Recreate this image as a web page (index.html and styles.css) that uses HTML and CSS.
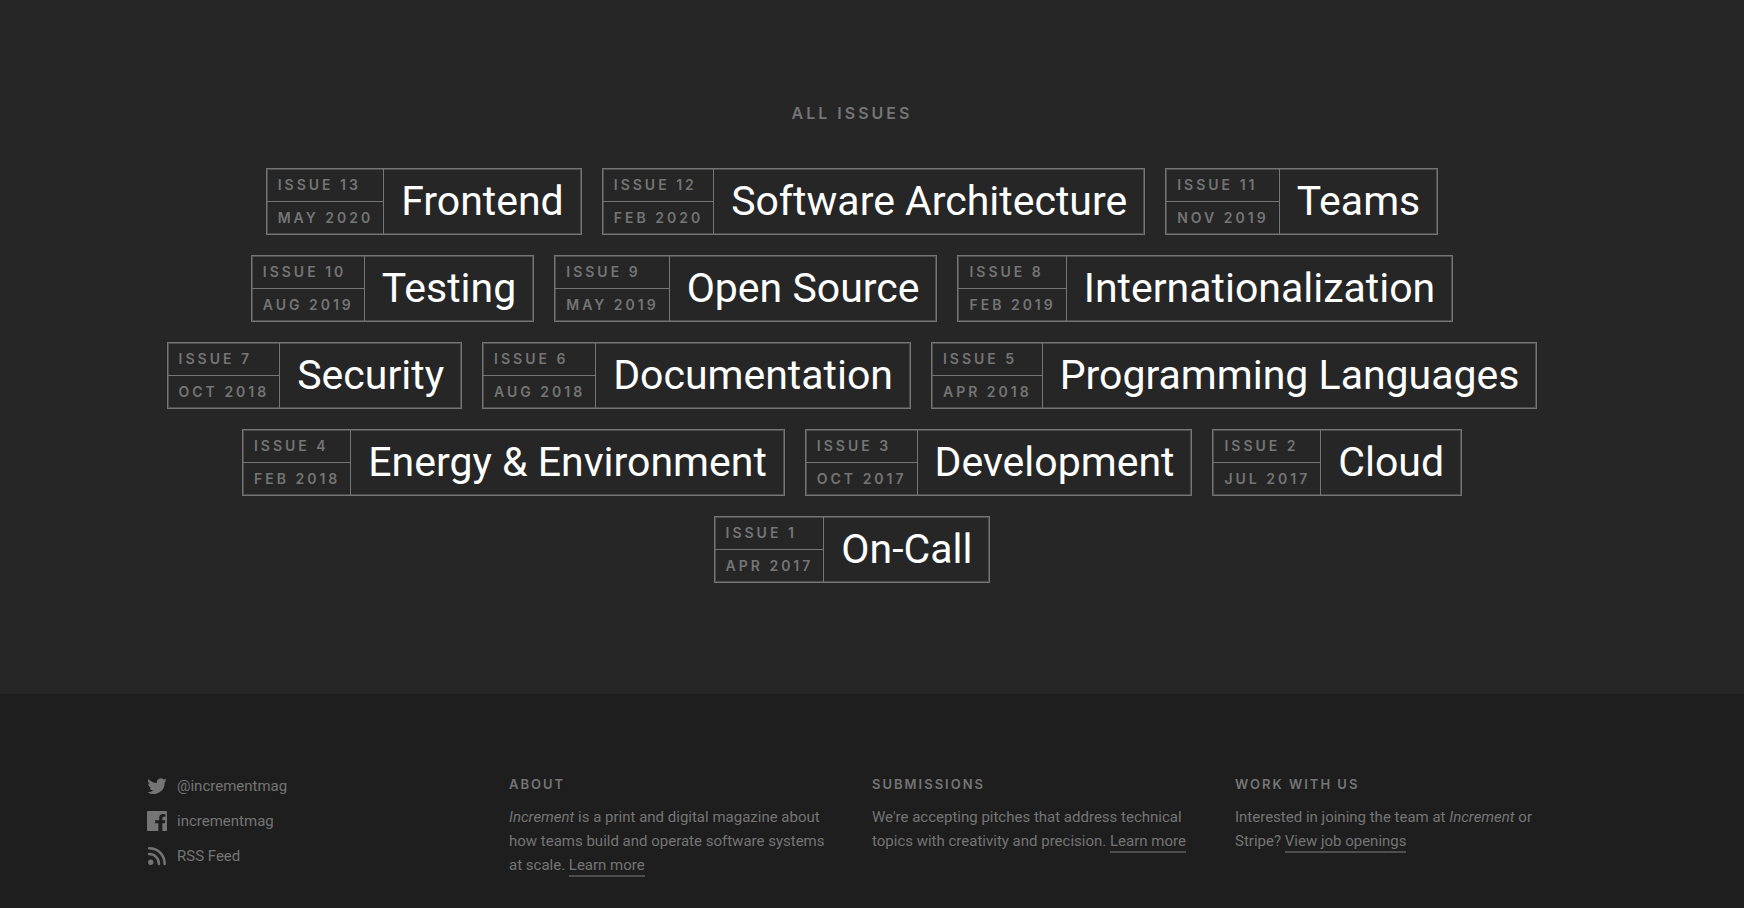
FILE: index.html
```html
<!DOCTYPE html>
<html lang="en">
<head>
<meta charset="utf-8">
<title>Increment: All Issues</title>
<link rel="stylesheet" href="styles.css">
</head>
<body>
<main class="issues">
  <div class="wrap issues-inner">
    <h2 class="issues-heading">All Issues</h2>
    <div class="issue-list">
      <a class="issue" href="#"><span class="meta"><span class="cell">Issue 13</span><span class="cell">May 2020</span></span><span class="name">Frontend</span></a>
      <a class="issue" href="#"><span class="meta"><span class="cell">Issue 12</span><span class="cell">Feb 2020</span></span><span class="name">Software Architecture</span></a>
      <a class="issue" href="#"><span class="meta"><span class="cell">Issue 11</span><span class="cell">Nov 2019</span></span><span class="name">Teams</span></a>
      <a class="issue" href="#"><span class="meta"><span class="cell">Issue 10</span><span class="cell">Aug 2019</span></span><span class="name">Testing</span></a>
      <a class="issue" href="#"><span class="meta"><span class="cell">Issue 9</span><span class="cell">May 2019</span></span><span class="name">Open Source</span></a>
      <a class="issue" href="#"><span class="meta"><span class="cell">Issue 8</span><span class="cell">Feb 2019</span></span><span class="name">Internationalization</span></a>
      <a class="issue" href="#"><span class="meta"><span class="cell">Issue 7</span><span class="cell">Oct 2018</span></span><span class="name">Security</span></a>
      <a class="issue" href="#"><span class="meta"><span class="cell">Issue 6</span><span class="cell">Aug 2018</span></span><span class="name">Documentation</span></a>
      <a class="issue" href="#"><span class="meta"><span class="cell">Issue 5</span><span class="cell">Apr 2018</span></span><span class="name">Programming Languages</span></a>
      <a class="issue" href="#"><span class="meta"><span class="cell">Issue 4</span><span class="cell">Feb 2018</span></span><span class="name">Energy &amp; Environment</span></a>
      <a class="issue" href="#"><span class="meta"><span class="cell">Issue 3</span><span class="cell">Oct 2017</span></span><span class="name">Development</span></a>
      <a class="issue" href="#"><span class="meta"><span class="cell">Issue 2</span><span class="cell">Jul 2017</span></span><span class="name">Cloud</span></a>
      <a class="issue" href="#"><span class="meta"><span class="cell">Issue 1</span><span class="cell">Apr 2017</span></span><span class="name">On-Call</span></a>
    </div>
  </div>
</main>
<footer class="footer">
  <div class="wrap footer-grid">
    <nav class="social">
      <a class="social-link" href="#">
        <svg class="icon" viewBox="0 0 24 24" aria-hidden="true"><path d="M23.600 4.900c-.9.400-1.800.6-2.700.8 1-.6 1.700-1.500 2.100-2.600-.9.500-1.900.9-3 1.100a4.800 4.800 0 0 0-8.100 4.300A13.500 13.500 0 0 1 2 3.600a4.700 4.700 0 0 0 1.500 6.300c-.8 0-1.500-.2-2.100-.6v.1c0 2.300 1.600 4.200 3.800 4.600-.7.200-1.400.2-2.100.1.600 1.900 2.300 3.200 4.400 3.300A9.600 9.600 0 0 1 .4 19.400a13.500 13.500 0 0 0 20.800-12c1-.7 1.800-1.500 2.400-2.500z"/></svg>
        <span>@incrementmag</span></a>
      <a class="social-link" href="#">
        <svg class="icon" viewBox="0 0 24 24" aria-hidden="true"><path d="M1.300 0h21.400C23.400 0 24 .6 24 1.300v21.400c0 .7-.6 1.300-1.300 1.300h-4.300v-9.300h3.100l.5-3.600h-3.600V8.800c0-1 .3-1.800 1.800-1.800h1.900V3.800c-.3 0-1.500-.1-2.800-.1-2.800 0-4.700 1.700-4.700 4.800v2.600H9.700v3.600h3.900V24H1.300C.6 24 0 23.400 0 22.700V1.300C0 .6.600 0 1.300 0z"/></svg>
        <span>incrementmag</span></a>
      <a class="social-link" href="#">
        <svg class="icon" viewBox="0 0 24 24" aria-hidden="true"><circle cx="4.500" cy="19.500" r="3.200"/><path class="wave" d="M2.500 9.700c6.900 0 11.800 4.900 11.800 11.800M2.500 2.800c10.800 0 18.700 7.900 18.700 18.700"/></svg>
        <span>RSS Feed</span></a>
    </nav>
    <section>
      <h3 class="footer-heading">About</h3>
      <p class="footer-text"><em>Increment</em> is a print and digital magazine about how teams build and operate software systems at scale. <a class="text-link" href="#">Learn more</a></p>
    </section>
    <section>
      <h3 class="footer-heading">Submissions</h3>
      <p class="footer-text">We're accepting pitches that address technical topics with creativity and precision. <a class="text-link" href="#">Learn more</a></p>
    </section>
    <section>
      <h3 class="footer-heading">Work with us</h3>
      <p class="footer-text">Interested in joining the team at <em>Increment</em> or Stripe? <a class="text-link" href="#">View job openings</a></p>
    </section>
  </div>
</footer>
</body>
</html>
```
FILE: styles.css
```css
* { box-sizing: border-box; }
body {
  display: flex;
  flex-direction: column;
  min-height: 100vh;
  margin: 0;
  background: #262626;
  color: #757575;
  font-family: Roboto, "Liberation Sans", sans-serif;
}
a { color: inherit; text-decoration: none; }
.wrap { max-width: 1452px; margin: 0 auto; }

.issues { padding: 101px 0 111px; }
.issues-inner { padding-right: 40px; }
.issues-heading {
  margin: 0 0 43px;
  font-family: Inter, sans-serif;
  font-size: 16px;
  font-weight: 600;
  line-height: 24px;
  letter-spacing: 3px;
  text-align: center;
  text-transform: uppercase;
}
.issue-list {
  display: flex;
  flex-wrap: wrap;
  justify-content: center;
  gap: 20px;
}
.issue {
  display: flex;
  height: 67px;
  border: 1px solid #757575;
  box-shadow: inset 0 0 0 1px #4e4e4e;
}
.meta {
  display: flex;
  flex-direction: column;
  border-right: 1px solid #757575;
}
.cell {
  flex: 1;
  padding: 0 10px 0 11px;
  font-family: Inter, sans-serif;
  font-size: 14px;
  font-weight: 600;
  line-height: 31px;
  letter-spacing: 3px;
  text-transform: uppercase;
}
.cell + .cell { border-top: 1px solid #757575; }
.name {
  padding: 0 17px;
  color: #fff;
  font-size: 41px;
  line-height: 64px;
}

.footer {
  flex: 1;
  padding: 78px 0 30px;
  background: #1e1e1e;
}
.footer-grid {
  display: grid;
  grid-template-columns: repeat(4, 1fr);
}
.footer-grid section { padding-right: 40px; }
.social {
  display: flex;
  flex-direction: column;
  gap: 15px;
  padding: 4px 0 0 1px;
}
.social-link {
  display: flex;
  align-items: center;
  gap: 10px;
  font-size: 15px;
  line-height: 20px;
}
.icon { width: 20px; height: 20px; fill: #757575; }
.wave { fill: none; stroke: #757575; stroke-width: 3; stroke-linecap: round; }
.footer-heading {
  margin: 0 0 9px;
  font-family: Inter, sans-serif;
  font-size: 13px;
  font-weight: 600;
  line-height: 24px;
  letter-spacing: 2px;
  text-transform: uppercase;
}
.footer-text {
  margin: 0;
  font-size: 15px;
  line-height: 24px;
}
.text-link { border-bottom: 2px solid #4e4e4e; padding-bottom: 1px; }
```
